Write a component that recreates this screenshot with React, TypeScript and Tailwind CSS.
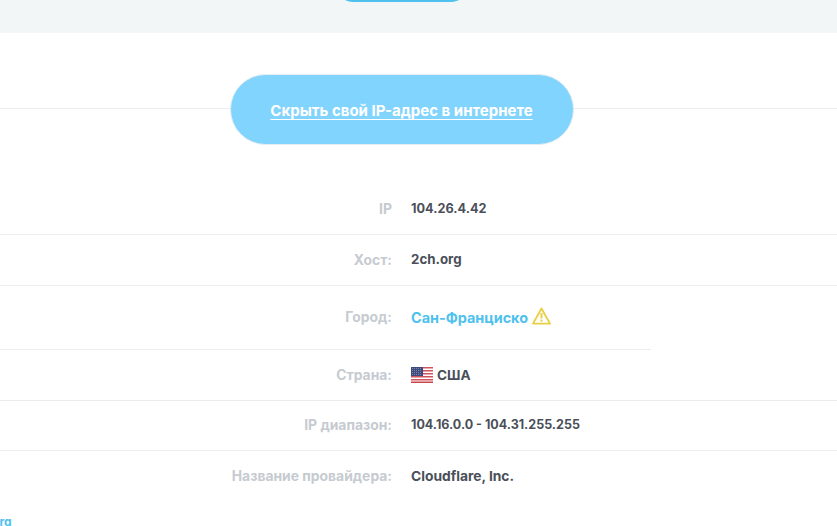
const rows = [
  { label: "IP", value: "104.26.4.42", height: "h-[51px]", size: "text-[12.7px]" },
  { label: "Хост:", value: "2ch.org", height: "h-[51px]", size: "text-[13.3px]" },
];

const rowsAfter = [
  { label: "IP диапазон:", value: "104.16.0.0 - 104.31.255.255", height: "h-[50px]", size: "text-[12.5px]" },
  { label: "Название провайдера:", value: "Cloudflare, Inc.", height: "h-[50px]", size: "text-[13.8px]" },
];

function WarningIcon() {
  return (
    <svg width="19" height="18" viewBox="0 0 19 18" fill="none" className="-mt-[3px] ml-[4px]">
      <path d="M9.5 1.5 L18 16.6 H1 Z" stroke="#e8cf45" strokeWidth="1.9" strokeLinejoin="round" />
      <path d="M9.5 6 V11.5" stroke="#e8cf45" strokeWidth="2" />
      <path d="M9.5 12.6 V14.6" stroke="#e8cf45" strokeWidth="2" />
    </svg>
  );
}

function UsFlag() {
  return (
    <svg width="22" height="16" viewBox="0 0 22 16" className="mr-[4px]">
      <rect width="22" height="16" fill="#fff" />
      <rect y="0" width="22" height="1.5" fill="#d0545c" />
      <rect y="3" width="22" height="1.5" fill="#d0545c" />
      <rect y="6" width="22" height="1.5" fill="#d0545c" />
      <rect y="9" width="22" height="1.5" fill="#d0545c" />
      <rect y="12" width="22" height="1.5" fill="#d0545c" />
      <rect y="14.5" width="22" height="1.5" fill="#c8434c" />
      <rect width="12" height="9" fill="#3f4a7c" />
      <path d="M1 1.5h10M1 3.5h10M1 5.5h10M1 7.5h10" stroke="#9aa3c4" strokeWidth="0.7" strokeDasharray="1 1" />
    </svg>
  );
}

function Row({ label, height, size, className, children }: { label: string; height: string; size?: string; className?: string; children: React.ReactNode }) {
  return (
    <div className={`flex items-center ${height} ${className ?? "border-b border-[#ececec]"}`}>
      <div className="w-[392px] shrink-0 text-right text-[13.9px] font-bold text-[#c6cbd1]">{label}</div>
      <div className={`ml-[19px] flex items-center font-bold text-[#4a4f59] ${size ?? "text-[14px]"}`}>{children}</div>
    </div>
  );
}

export default function App() {
  return (
    <div className="h-[526px] w-[837px] overflow-hidden bg-white font-['Inter','Liberation_Sans',sans-serif]">
      <div className="flex h-[33px] justify-center overflow-hidden bg-[#f3f6f7] pr-[34px]">
        <div className="-mt-[40px] h-[42px] w-[138px] shrink-0 rounded-full bg-[#4fc1ef]" />
      </div>

      <div className="flex h-[76px] items-start justify-center border-b border-[#ececec] pt-[41px] pr-[34px]">
        <a className="relative flex h-[71px] w-[344px] shrink-0 items-center justify-center rounded-[36px] border border-[#e6eef3] bg-[#81d4fd] pt-[3px] text-[15px] font-bold text-white underline underline-offset-[3px]">
          Скрыть свой IP-адрес в интернете
        </a>
      </div>

      <div className="pt-[75px]">
        {rows.map((r) => (
          <Row key={r.label} label={r.label} height={r.height} size={r.size}>
            {r.value}
          </Row>
        ))}
        <Row label="Город:" height="h-[64px]" size="text-[14.4px]" className="w-[651px] border-b border-[#ececec]">
          <span className="text-[#4fc1ef]">Сан-Франциско</span>
          <WarningIcon />
        </Row>
        <Row label="Страна:" height="h-[51px]" size="text-[13.6px]">
          <UsFlag />
          США
        </Row>
        {rowsAfter.map((r, i) => (
          <Row key={r.label} label={r.label} height={r.height} size={r.size} className={i === 1 ? "border-0" : undefined}>
            {r.value}
          </Row>
        ))}
        <div className="-ml-[34px] mt-[12px] text-[12px] font-bold text-[#4fc1ef]">2ch.org</div>
      </div>
    </div>
  );
}
